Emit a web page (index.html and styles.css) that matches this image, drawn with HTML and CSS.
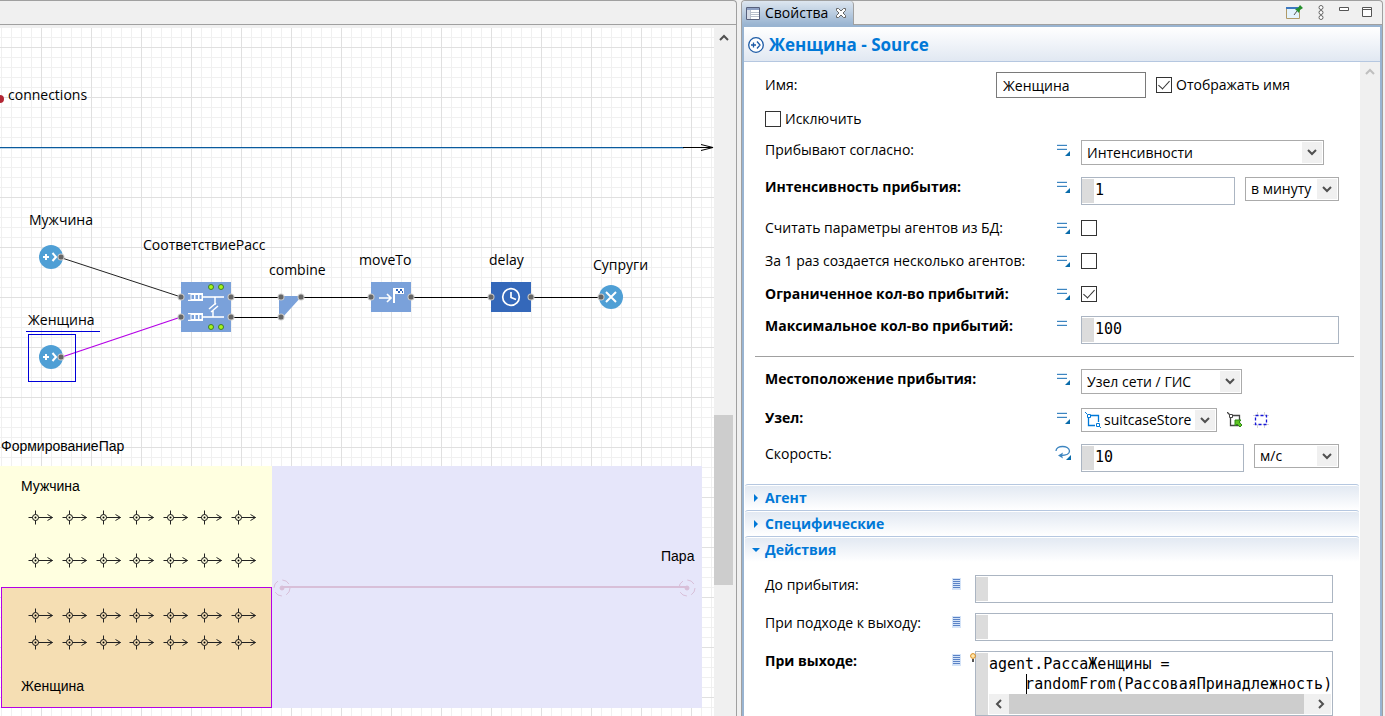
FILE: index.html
```html
<!DOCTYPE html>
<html lang="ru">
<head>
<meta charset="utf-8">
<title>Женщина - Source</title>
<link rel="stylesheet" href="styles.css">
</head>
<body>
<svg class="defs" width="0" height="0" aria-hidden="true">
  <symbol id="static-value" viewBox="0 0 14 14">
    <path d="M0 1.500h10M0 5.500h10" stroke="#d4e6f5"/>
    <path d="M0 2.500h10M0 6.500h10" stroke="#3d85c0"/>
    <path d="M13 8v5H8z" fill="#0a6cab"/>
  </symbol>
  <symbol id="plain-value" viewBox="0 0 14 14">
    <path d="M0 1.500h10M0 5.500h10" stroke="#d4e6f5"/>
    <path d="M0 2.500h10M0 6.500h10" stroke="#3d85c0"/>
  </symbol>
  <symbol id="dynamic-value" viewBox="0 0 16 16">
    <path d="M1 6C1 0 14 0 14.500 6c0 3-3 4.500-9 4.500" fill="none" stroke="#3d85c0" stroke-width="1.300"/>
    <path d="M3 10.500l5-3-1 3 1 3z" fill="#3d85c0"/>
    <path d="M16 10v5h-5z" fill="#0a6cab"/>
  </symbol>
  <symbol id="code-lines" viewBox="0 0 9 12">
    <path d="M0 0h9v12H0z" fill="#d5e4f8"/>
    <path d="M1 1.500h7M1 3.500h7M1 5.500h7M1 7.500h7M1 9.500h7" stroke="#5b83c6"/>
  </symbol>
  <symbol id="chevron" viewBox="0 0 10 7">
    <path d="M1 1l4 4 4-4" fill="none" stroke="#505050" stroke-width="2"/>
  </symbol>
  <symbol id="node" viewBox="0 0 16 16">
    <path d="M3.500 6v7.500H10M6 3.500h7.500V10" fill="none" stroke="#0078d7" stroke-width="1.300"/>
    <path d="M0 0l2 2M14 14l2 2" stroke="#0078d7"/>
    <path d="M2.500 2.500h3v3h-3zM11.500 11.500h3v3h-3z" fill="#fff" stroke="#0078d7"/>
  </symbol>
</svg>

<main class="workbench">
  <section class="editor" aria-label="Диаграмма">
    <div class="editor-tabs"></div>
    <div class="editor-body">
      <div class="canvas">
        <svg class="diagram" width="713" height="688" viewBox="0 28 713 688">
          <defs>
            <symbol id="port" viewBox="-4 -4 8 8"><circle r="3.500" fill="#c8c8c8"/><circle r="2.500" fill="#666"/></symbol>
            <symbol id="source" viewBox="-12 -12 24 24">
              <circle r="12" fill="#4f9fd5"/>
              <path d="M-8 0h6M-5-3v6M1.500-4L5 0 1.500 4" fill="none" stroke="#fff" stroke-width="2"/>
            </symbol>
            <symbol id="agent" viewBox="-8 -8 26 16">
              <path d="M-7 0h4M3 0h14M0-7v4M0 3v4M12-3l5 3-5 3" fill="none" stroke="#222"/>
              <circle r="3" fill="none" stroke="#111"/>
              <circle r="1"/>
            </symbol>
            <g id="agent-row">
              <use href="#agent" x="27.500" y="-7.500" width="26" height="16"/>
              <use href="#agent" x="61.500" y="-7.500" width="26" height="16"/>
              <use href="#agent" x="95.500" y="-7.500" width="26" height="16"/>
              <use href="#agent" x="128.500" y="-7.500" width="26" height="16"/>
              <use href="#agent" x="162.500" y="-7.500" width="26" height="16"/>
              <use href="#agent" x="196.500" y="-7.500" width="26" height="16"/>
              <use href="#agent" x="230.500" y="-7.500" width="26" height="16"/>
            </g>
            <g id="queue">
              <path d="M7-4h15v8H7v-1.300h2.500v-5.400H7z" fill="#fff"/>
              <path d="M10.500-2h2.500v4h-2.500zM14.500-2H17v4h-2.500zM18.500-2h2v4h-2z" fill="#7aa1da"/>
              <path d="M21 0h22" stroke="#fff" stroke-width="1.600"/>
            </g>
          </defs>

          <circle cx="0" cy="99" r="4" fill="#b32634"/>
          <text class="label" x="8" y="100">connections</text>
          <path d="M0 147.500h684" stroke="#0b5a9c"/>
          <path d="M0 148.500h684" stroke="#bcd6ea"/>
          <path d="M683 147.500h29M701 144.500l12 3-12 3" fill="none" stroke="#000"/>

          <path d="M62 258L181 297" stroke="#222"/>
          <path d="M62 357L181 317" stroke="#b400e6" stroke-width="1.300"/>
          <path d="M231 297.500h50M231 317.500h50M301 297.500h70M411 297.500h80M531 297.500h70" stroke="#000"/>

          <text class="label" x="29" y="225">Мужчина</text>
          <use href="#source" x="39" y="245" width="24" height="24"/>
          <use href="#port" x="57" y="253" width="8" height="8"/>

          <text class="label" x="28" y="325">Женщина</text>
          <path d="M26 331.500h74" stroke="#0000d8"/>
          <rect x="28.500" y="334.500" width="47" height="47" fill="none" stroke="#0000d8"/>
          <use href="#source" x="39" y="345" width="24" height="24"/>
          <use href="#port" x="57" y="353" width="8" height="8"/>

          <text class="label" x="143" y="250">СоответствиеРасс</text>
          <rect x="181" y="282" width="50" height="50" fill="#7aa1da"/>
          <use href="#queue" x="181" y="297"/>
          <use href="#queue" x="181" y="317"/>
          <path d="M215 297v8M213 310v7M209 309l7-6M211 312l7-6" fill="none" stroke="#fff" stroke-width="1.500"/>
          <g fill="#a4f51b" stroke="#3e7d2b">
            <circle cx="211" cy="287" r="2.500"/><circle cx="221" cy="287" r="2.500"/>
            <circle cx="211" cy="327" r="2.500"/><circle cx="221" cy="327" r="2.500"/>
          </g>
          <use href="#port" x="177" y="293" width="8" height="8"/>
          <use href="#port" x="177" y="313" width="8" height="8"/>
          <use href="#port" x="227" y="293" width="8" height="8"/>
          <use href="#port" x="227" y="313" width="8" height="8"/>

          <text class="label" x="269" y="275">combine</text>
          <path d="M279 296h23l-20 22h-3z" fill="#7aa1da"/>
          <use href="#port" x="277" y="293" width="8" height="8"/>
          <use href="#port" x="277" y="313" width="8" height="8"/>
          <use href="#port" x="297" y="293" width="8" height="8"/>

          <text class="label" x="359" y="265">moveTo</text>
          <rect x="371" y="282" width="40" height="30" fill="#7aa1da"/>
          <path d="M379 298h12M387 294l4 4-4 4" fill="none" stroke="#fff" stroke-width="1.700"/>
          <path d="M393 288h11v6h-9v9h-2z" fill="#fff"/>
          <path d="M396 289h2v2h-2zM400 289h2v2h-2zM398 291h2v2h-2zM402 291h1v2h-1z" fill="#2f62b5"/>
          <use href="#port" x="367" y="293" width="8" height="8"/>
          <use href="#port" x="407" y="293" width="8" height="8"/>

          <text class="label" x="489" y="265">delay</text>
          <rect x="491" y="282" width="40" height="30" fill="#3468ba"/>
          <circle cx="511" cy="297" r="8.300" fill="none" stroke="#fff" stroke-width="1.700"/>
          <path d="M511 292v5.500l5 2" fill="none" stroke="#fff" stroke-width="1.700"/>
          <use href="#port" x="487" y="293" width="8" height="8"/>
          <use href="#port" x="527" y="293" width="8" height="8"/>

          <text class="label" x="593" y="270">Супруги</text>
          <circle cx="611" cy="297" r="12" fill="#4f9fd5"/>
          <path d="M606 292l10 10M616 292l-10 10" stroke="#fff" stroke-width="2"/>
          <use href="#port" x="597" y="293" width="8" height="8"/>

          <text class="caption" x="1" y="451">ФормированиеПар</text>
          <rect x="0" y="466" width="272" height="122" fill="#ffffe0"/>
          <rect x="272" y="466" width="430" height="242" fill="#e6e6fa"/>
          <rect x="1.500" y="587.500" width="270" height="120" fill="#f5deb3" stroke="#b400e6"/>
          <text class="caption" x="21" y="491">Мужчина</text>
          <text class="caption" x="21" y="691">Женщина</text>
          <text class="caption" x="661" y="561">Пара</text>
          <use href="#agent-row" y="517"/>
          <use href="#agent-row" y="560"/>
          <use href="#agent-row" y="615"/>
          <use href="#agent-row" y="642"/>
          <g stroke="#d8bfd8" fill="none">
            <path d="M282 587h405" stroke-width="2"/>
            <circle cx="282" cy="588" r="8" stroke-dasharray="8 4.600"/>
            <circle cx="687" cy="588" r="8" stroke-dasharray="8 4.600"/>
            <circle cx="282" cy="588" r="2" fill="#d8bfd8"/>
            <circle cx="687" cy="588" r="2" fill="#d8bfd8"/>
          </g>
        </svg>
      </div>
      <div class="scrollbar">
        <svg class="scroll-up" width="10" height="7"><path d="M1 6l4-4 4 4" fill="none" stroke="#505050" stroke-width="2"/></svg>
        <div class="scroll-thumb"></div>
      </div>
    </div>
  </section>

  <section class="properties" aria-label="Свойства">
    <div class="view-bar">
      <div class="view-tab">
        <svg width="14" height="13"><path d="M.5.500h13v12H.500z" fill="#fff" stroke="#57607c"/><path d="M1 1h12v2H1z" fill="#8da0c4"/><path d="M1 3h3v9H1z" fill="#d5dbe6"/><path d="M4.500 3v9M4 5.500h9M4 7.500h9M4 9.500h9" stroke="#b9c0cc"/></svg>
        <span>Свойства</span>
        <button class="tool" aria-label="Закрыть"><svg width="10" height="10"><path d="M.5.500h2L5 3 7.500.500h2v2L7 5l2.500 2.500v2h-2L5 7 2.500 9.500h-2v-2L3 5 .500 2.500z" fill="#fff" stroke="#666"/></svg></button>
      </div>
      <div class="view-tools">
        <button class="tool" aria-label="Закрепить"><svg width="17" height="15"><path d="M.5 2.500h13v11H.500z" fill="#e4f3fd" stroke="#b09a68"/><path d="M0 2h13v2H0z" fill="#3c78c0"/><path d="M8 10l3-4" stroke="#555"/><path d="M9 4l3-1 2-3 3 3-3 2-1 3z" fill="#25902d"/></svg></button>
        <button class="tool menu" aria-label="Меню"><svg width="6" height="15"><g fill="#fff" stroke="#666"><circle cx="3" cy="2.500" r="2"/><circle cx="3" cy="7.500" r="2"/><circle cx="3" cy="12.500" r="2"/></g></svg></button>
        <button class="tool" aria-label="Свернуть"><svg width="10" height="15"><path d="M.5 2.500h9v3h-9z" fill="#fff" stroke="#555"/></svg></button>
        <button class="tool" aria-label="Развернуть"><svg width="10" height="15"><path d="M.5 2.500h9v9h-9zM0 4.500h10" fill="#fff" stroke="#555"/></svg></button>
      </div>
    </div>

    <div class="view-body">
      <header class="title">
        <svg width="16" height="16"><circle cx="8" cy="8" r="7.300" fill="#fff" stroke="#1d5ba6" stroke-width="1.300"/><path d="M3 8h5M5.500 5.500v5M9 4.500L12 8l-3 3.500" fill="none" stroke="#1d5ba6" stroke-width="1.300"/></svg>
        <h1>Женщина - Source</h1>
      </header>
      <div class="view-scroll">
        <form class="form">
          <div class="fields">
            <div class="row center">
              <label class="name" for="name">Имя:</label>
              <input class="text w-name" id="name" type="text" value="Женщина">
              <label class="check-label"><input class="check" type="checkbox" checked>Отображать имя</label>
            </div>
            <div class="row short">
              <label class="check-label"><input class="check" type="checkbox">Исключить</label>
            </div>
            <div class="row">
              <label class="name wide" for="arrive">Прибывают согласно:</label>
              <svg class="mark"><use href="#static-value"/></svg>
              <div class="combo w-arrive"><select id="arrive"><option>Интенсивности</option></select><span><svg><use href="#chevron"/></svg></span></div>
            </div>
            <div class="row">
              <label class="name wide bold" for="rate">Интенсивность прибытия:</label>
              <svg class="mark"><use href="#static-value"/></svg>
              <input class="code-input w-rate" id="rate" type="text" value="1">
              <div class="combo small w-unit"><select aria-label="Единица интенсивности"><option>в минуту</option></select><span><svg><use href="#chevron"/></svg></span></div>
            </div>
            <div class="row check-row">
              <label class="name wide" for="db">Считать параметры агентов из БД:</label>
              <svg class="mark"><use href="#static-value"/></svg>
              <input class="check" id="db" type="checkbox">
            </div>
            <div class="row check-row">
              <label class="name wide" for="many">За 1 раз создается несколько агентов:</label>
              <svg class="mark"><use href="#static-value"/></svg>
              <input class="check" id="many" type="checkbox">
            </div>
            <div class="row check-row">
              <label class="name wide bold" for="limited">Ограниченное кол-во прибытий:</label>
              <svg class="mark"><use href="#static-value"/></svg>
              <input class="check" id="limited" type="checkbox" checked>
            </div>
            <div class="row">
              <label class="name wide bold" for="max">Максимальное кол-во прибытий:</label>
              <svg class="mark"><use href="#plain-value"/></svg>
              <input class="code-input w-fill" id="max" type="text" value="100">
            </div>
            <hr class="divider">
            <div class="row tall">
              <label class="name wide bold" for="place">Местоположение прибытия:</label>
              <svg class="mark"><use href="#static-value"/></svg>
              <div class="combo w-place"><select id="place"><option>Узел сети / ГИС</option></select><span><svg><use href="#chevron"/></svg></span></div>
            </div>
            <div class="row">
              <label class="name wide bold" for="node-select">Узел:</label>
              <svg class="mark"><use href="#static-value"/></svg>
              <div class="combo small with-icon w-node"><svg class="combo-icon"><use href="#node"/></svg><select id="node-select"><option>suitcaseStore</option></select><span><svg><use href="#chevron"/></svg></span></div>
              <button class="tool pick" type="button" aria-label="Перейти"><svg width="16" height="16"><path d="M0 0l3 3M3.500 6v7.500h9V3.500H6" fill="none" stroke="#444" stroke-width="1.300"/><path d="M2.500 2.500h3v3h-3z" fill="#fff" stroke="#444"/><path d="M8 8h6l-2 2 3 3-2 2-3-3-2 2z" fill="#5fc321" stroke="#2d8a16"/></svg></button>
              <button class="tool pick" type="button" aria-label="Выбрать"><svg width="16" height="16"><path d="M4.500 0v16M11.500 0v16M0 3.500h16M0 12.500h16" stroke="#d5d5d5"/><path d="M2.500 3.500h11v9h-11z" fill="#fff" stroke="#1616d8" stroke-width="1.300" stroke-dasharray="3 2"/></svg></button>
            </div>
            <div class="row">
              <label class="name wide" for="speed">Скорость:</label>
              <svg class="mark dynamic"><use href="#dynamic-value" width="16" height="16" x="-2" y="-2"/></svg>
              <input class="code-input w-speed" id="speed" type="text" value="10">
              <div class="combo small w-speed-unit"><select aria-label="Единица скорости"><option>м/с</option></select><span><svg><use href="#chevron"/></svg></span></div>
            </div>
          </div>

          <div class="sections">
            <button class="section" type="button" aria-expanded="false"><svg width="8" height="8"><path d="M2 0l4 4-4 4z" fill="#0078d7"/></svg>Агент</button>
            <button class="section" type="button" aria-expanded="false"><svg width="8" height="8"><path d="M2 0l4 4-4 4z" fill="#0078d7"/></svg>Специфические</button>
            <button class="section" type="button" aria-expanded="true"><svg width="8" height="8"><path d="M0 2h8L4 6z" fill="#0078d7"/></svg>Действия</button>
          </div>

          <div class="actions">
            <div class="row">
              <label class="name action-name" for="before">До прибытия:</label>
              <svg class="lines"><use href="#code-lines"/></svg>
              <input class="code-input w-fill" id="before" type="text">
            </div>
            <div class="row">
              <label class="name action-name" for="approach">При подходе к выходу:</label>
              <svg class="lines"><use href="#code-lines"/></svg>
              <input class="code-input w-fill" id="approach" type="text">
            </div>
            <div class="row">
              <label class="name action-name bold" for="exit">При выходе:</label>
              <svg class="lines"><use href="#code-lines"/></svg>
              <div class="code-box">
                <svg class="bulb" width="6" height="9"><circle cx="3" cy="3" r="2.400" fill="#ffe8b0" stroke="#d98a1a"/><path d="M2 6h2v3H2z" fill="#555"/></svg>
                <textarea id="exit" rows="2" wrap="off">agent.РассаЖенщины =
    randomFrom(РассоваяПринадлежность)</textarea>
                <i class="caret"></i>
                <div class="h-scroll">
                  <svg width="7" height="10"><path d="M6 1L2 5l4 4" fill="none" stroke="#505050" stroke-width="2"/></svg>
                  <div class="h-thumb"></div>
                  <svg width="7" height="10"><path d="M1 1l4 4-4 4" fill="none" stroke="#505050" stroke-width="2"/></svg>
                </div>
              </div>
            </div>
          </div>
        </form>
        <div class="scrollbar light">
          <svg class="scroll-up" width="10" height="7"><path d="M1 6l4-4 4 4" fill="none" stroke="#bfbfbf" stroke-width="2"/></svg>
        </div>
      </div>
    </div>
  </section>
</main>
</body>
</html>
```
FILE: styles.css
```css
* { box-sizing: border-box; }

body {
  margin: 0;
  height: 100vh;
  overflow: hidden;
  background: #f0f0f0;
  color: #000;
  font: 14px/20px "Open Sans", "Noto Sans", sans-serif;
}

.defs { position: absolute; }
svg { display: block; flex: none; }
.bold { font-weight: 700; }

.workbench {
  display: flex;
  gap: 4px;
  height: 100%;
  padding-right: 2px;
}

.editor {
  flex: 736 1 0;
  min-width: 0;
  display: flex;
  flex-direction: column;
  border: 1px solid #a0a0a0;
  border-width: 1px 1px 0 0;
  border-radius: 0 4px 0 0;
}

.editor-tabs {
  flex: none;
  height: 24px;
  border-bottom: 1px solid #a0a0a0;
}

.editor-body {
  flex: 1;
  min-height: 0;
  display: flex;
  padding: 3px 3px 0 0;
}

.canvas {
  flex: 1;
  min-width: 0;
  overflow: hidden;
  background-color: #fff;
  background-image:
    linear-gradient(#e0e0e0 1px, transparent 1px),
    linear-gradient(90deg, #e0e0e0 1px, transparent 1px),
    linear-gradient(#f0f0f0 1px, transparent 1px),
    linear-gradient(90deg, #f0f0f0 1px, transparent 1px);
  background-size: 50px 50px, 50px 50px, 10px 10px, 10px 10px;
  background-position: 0 19px, 41px 0, 0 9px, 1px 0;
}

.label { font: 14px "Open Sans", "Noto Sans", sans-serif; }
.caption { font: 14px "Liberation Sans", sans-serif; }

.scrollbar {
  flex: none;
  width: 19px;
  display: flex;
  flex-direction: column;
  align-items: center;
  padding-top: 6px;
  background: #f0f0f0;
}

.scrollbar.light { width: 20px; }
.scroll-thumb { width: 100%; height: 170px; margin-top: 374px; background: #cdcdcd; }

.properties {
  flex: 640 1 0;
  min-width: 0;
  display: flex;
  flex-direction: column;
  border: 1px solid #a0a0a0;
  border-bottom: 0;
  border-radius: 4px 4px 0 0;
}

.view-bar {
  flex: none;
  height: 24px;
  display: flex;
  justify-content: space-between;
  border-bottom: 1px solid #a0a0a0;
}

.view-tab {
  display: flex;
  align-items: center;
  gap: 5px;
  height: 24px;
  padding: 0 7px 0 4px;
  border-right: 1px solid #a0a0a0;
  border-radius: 4px 4px 0 0;
  background: linear-gradient(#dde6f0, #99b4d1);
}

.view-tab .tool { margin-left: 3px; }

.view-tools {
  display: flex;
  align-items: center;
  gap: 13px;
  padding-right: 10px;
}

.tool {
  border: 0;
  padding: 0;
  background: none;
}

.tool.menu { margin: 0 2px; }

.view-body {
  flex: 1;
  min-height: 0;
  display: flex;
  flex-direction: column;
  border: 2px solid #99b4d1;
  border-bottom: 0;
  background: #fff;
}

.title {
  flex: none;
  display: flex;
  align-items: center;
  gap: 5px;
  height: 35px;
  padding: 2px 0 0 4px;
  border-bottom: 1px solid #b5c7e0;
  background: linear-gradient(#fff, #e1e8f2);
}

.title h1 {
  margin: 0;
  color: #0078d7;
  font-size: 17px;
  line-height: 22px;
}

.view-scroll {
  flex: 1;
  min-height: 0;
  display: flex;
}

.form { flex: 1; min-width: 0; overflow: hidden; }

.fields {
  display: flex;
  flex-direction: column;
  gap: 12px;
  padding: 10px 21px 12px;
}

.row {
  display: flex;
  align-items: flex-start;
  gap: 10px;
}

.row.center { align-items: center; }
.row.short { height: 18px; align-items: center; }
.row.check-row { height: 21px; align-items: center; }
.row.tall { height: 27px; }

.name { flex: none; width: 221px; white-space: nowrap; }
.name.wide { width: 282px; }
.name.action-name { width: 177px; }

.mark { width: 14px; height: 14px; margin-top: 3px; }
.check-row .mark { margin-top: 0; }
.mark.dynamic { overflow: visible; }
.lines { width: 9px; height: 12px; margin: 3px 4px 0 0; }

.check-label {
  display: flex;
  align-items: center;
  gap: 4px;
}

.check {
  appearance: none;
  flex: none;
  display: grid;
  justify-content: center;
  width: 16px;
  height: 16px;
  margin: 0;
  border: 1px solid #333;
  background: #fff;
}

.check:checked::after {
  content: "";
  width: 5px;
  height: 10px;
  border: solid #333;
  border-width: 0 1px 1px 0;
  transform: rotate(42deg);
}

.text, .code-input, select {
  min-width: 0;
  border-radius: 0;
  color: #000;
  font: inherit;
  outline: 0;
}

.text {
  height: 26px;
  padding: 0 6px;
  border: 1px solid #7a7a7a;
}

.code-input {
  height: 28px;
  padding: 0 4px 2px 13px;
  border: 1px solid #abb5c2;
  background: linear-gradient(#dcdcdc, #dcdcdc) 0 1px / 12px 24px no-repeat, #fff;
  font: 15px "DejaVu Sans Mono", monospace;
}

.combo {
  position: relative;
  flex: none;
  height: 25px;
}

.combo.small { height: 24px; }

.combo select {
  appearance: none;
  width: 100%;
  height: 100%;
  padding: 0 22px 0 5px;
  border: 1px solid #ababab;
  background: #fff;
}

.combo span {
  position: absolute;
  inset: 2px 2px 2px auto;
  width: 20px;
  display: grid;
  place-items: center;
  background: #f0f0f0;
  pointer-events: none;
}

.combo span svg { width: 10px; height: 7px; }
.combo.with-icon select { padding-left: 22px; }
.combo-icon { position: absolute; left: 4px; top: 4px; width: 16px; height: 16px; }
.pick { margin-top: 4px; }

.w-name { width: 150px; }
.w-arrive { width: 243px; }
.w-rate { width: 154px; }
.w-unit { width: 94px; }
.w-fill { flex: 1; }
.w-place { width: 161px; }
.w-node { width: 136px; }
.w-speed { width: 163px; }
.w-speed-unit { width: 85px; }

.divider {
  width: auto;
  height: 1px;
  margin: 0 -15px 0 -10px;
  border: 0;
  background: #a0a0a0;
}

.sections { padding: 0 1px; }

.section {
  display: flex;
  align-items: center;
  gap: 5px;
  width: 100%;
  height: 26px;
  padding: 0 7px;
  border: 0;
  border-top: 1px solid #b5c7e0;
  border-radius: 3px 3px 0 0;
  background: linear-gradient(#e1e8f2, #fff);
  box-shadow: inset 0 1px #fff;
  color: #0078d7;
  font: inherit;
  font-weight: 700;
}

.actions {
  display: flex;
  flex-direction: column;
  gap: 10px;
  padding: 13px 27px 0 21px;
}

.code-box {
  position: relative;
  flex: 1;
  min-width: 0;
  padding: 2px 1px 1px 13px;
  border: 1px solid #abb5c2;
  background: linear-gradient(#dcdcdc, #dcdcdc) 0 1px / 12px 100% no-repeat, #fff;
}

.code-box textarea {
  display: block;
  width: 100%;
  height: 40px;
  margin: 0;
  padding: 0;
  border: 0;
  outline: 0;
  overflow: hidden;
  resize: none;
  background: none;
  color: #000;
  font: 15px/20px "DejaVu Sans Mono", monospace;
}

.bulb { position: absolute; left: -6px; top: 1px; }
.caret { position: absolute; left: 50px; top: 22px; width: 1px; height: 20px; background: #000; }

.h-scroll {
  display: flex;
  align-items: center;
  gap: 7px;
  height: 20px;
  padding: 0 6px;
  background: #f0f0f0;
}

.h-thumb { flex: 1; height: 100%; margin-right: 7px; background: #cdcdcd; }
```
